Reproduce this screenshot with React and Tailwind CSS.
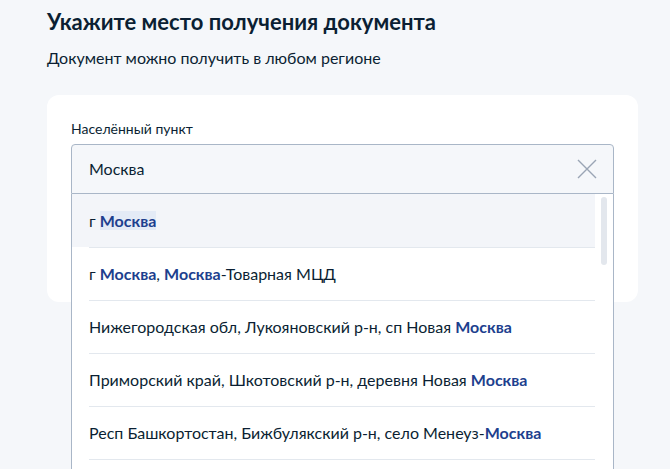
const items = [
  [["г ", false], ["Москва", true]],
  [["г ", false], ["Москва", true], [", ", false], ["Москва", true], ["-Товарная МЦД", false]],
  [["Нижегородская обл, Лукояновский р-н, сп Новая ", false], ["Москва", true]],
  [["Приморский край, Шкотовский р-н, деревня Новая ", false], ["Москва", true]],
  [["Респ Башкортостан, Бижбулякский р-н, село Менеуз-", false], ["Москва", true]],
  [],
];

const App = () => {
  return (
    <div
      className="h-[469px] w-[670px] overflow-hidden bg-[#f5f7fa] pl-[47px] pt-[6px] text-[#0b1f33]"
      style={{ fontFamily: "Lato, 'Noto Sans', sans-serif" }}
    >
      {/* Header */}
      <h1 className="text-[22px] font-bold leading-8">Укажите место получения документа</h1>
      <p className="mt-[8px] text-[16px] leading-6">Документ можно получить в любом регионе</p>

      {/* Card */}
      <div className="relative mt-[25px] h-[207px] w-[591px] rounded-xl bg-white px-6 pt-6">
        <div className="mb-[5px] text-[14px] leading-5">Населённый пункт</div>
        <div className="relative">
          <div className="flex h-[50px] items-center justify-between rounded-t-[4px] border border-[#a9b6c7] bg-[#f5f7fa] pl-[17px] pr-[16px]">
            <span className="text-[16px]">Москва</span>
            <svg width="20" height="20" viewBox="0 0 20 20" className="text-[#9aa5b5]">
              <path d="M1 1L19 19M19 1L1 19" stroke="currentColor" strokeWidth="1.4" fill="none" />
            </svg>
          </div>

          {/* Suggestions */}
          <div className="absolute left-0 right-0 top-[50px] z-10 h-[300px] overflow-hidden border-x border-b border-[#a9b6c7] bg-white">
            <div className="flex">
              <ul className="flex-1">
                {items.map((parts, i) => (
                  <li key={i} className={i === 0 ? "bg-[#f3f5f9]" : ""}>
                    <div
                      className={`ml-[17px] flex h-[53px] items-center text-[16px] ${
                        i === 0 ? "" : "border-t border-[#e3e8ee]"
                      }`}
                    >
                      <span>
                        {parts.map(([t, hl], j) =>
                          hl ? (
                            <mark
                              key={j}
                              className={`font-bold text-[#1d3f8e] ${i === 0 ? "bg-[#e4ebf6]" : "bg-transparent"}`}
                            >
                              {t}
                            </mark>
                          ) : (
                            <span key={j}>{t}</span>
                          )
                        )}
                      </span>
                    </div>
                  </li>
                ))}
              </ul>
              <div className="w-[18px] pl-[6px] pt-[3px]">
                <div className="h-[68px] w-[6px] rounded-full bg-[#e3e7ed]" />
              </div>
            </div>
          </div>
        </div>
      </div>
    </div>
  );
};

export default App;
